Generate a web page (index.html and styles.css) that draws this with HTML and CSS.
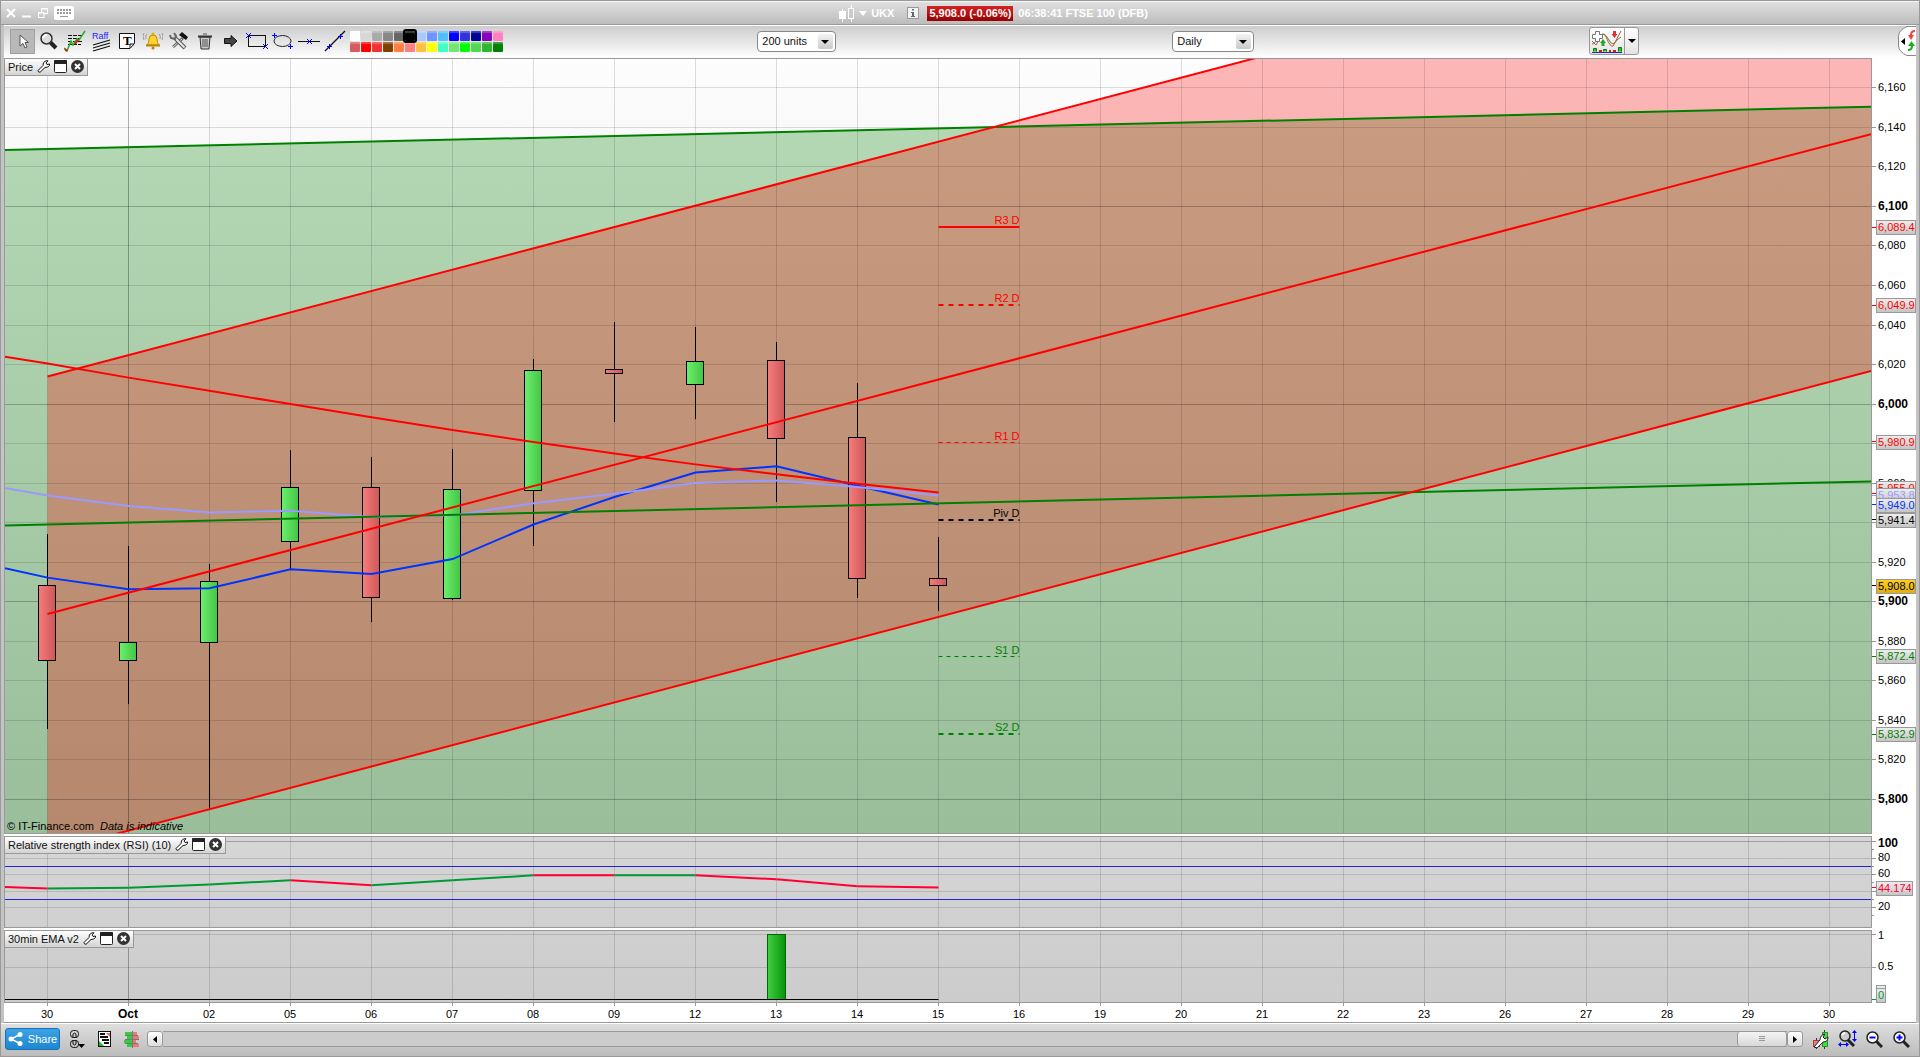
FILE: index.html
```
<!DOCTYPE html>
<html lang="en">

<head>
  <meta charset="UTF-8" />
  <title>UKX FTSE 100 (DFB)</title>
  <link rel="stylesheet" href="styles.css">
</head>

<body>
  <!-- title bar -->
  <header class="titlebar">
    <div class="win-btns">
      <button type="button" aria-label="Close"><svg width="10" height="10"><path d="M1 1L9 9M9 1L1 9" stroke="#fff" stroke-width="2"/></svg></button>
      <button type="button" aria-label="Minimise"><svg width="10" height="10"><path d="M0 8.5H9" stroke="#fff" stroke-width="2"/></svg></button>
      <button type="button" aria-label="Restore"><svg width="10" height="10"><path d="M3.500 4V.5H9.500V5.500H6M3 1H10M.5 4.500H6V9.500H.5zM0 5H6" fill="none" stroke="#fff"/></svg></button>
      <button type="button" aria-label="Keyboard"><svg width="20" height="14"><rect width="20" height="14" rx="2" fill="#fff"/><path d="M3 4H17M3 7H17" stroke="#999" stroke-width="2" stroke-dasharray="2 1"/><path d="M6 10.500H14" stroke="#999"/></svg></button>
    </div>
    <div class="instrument">
      <svg width="16" height="17"><path d="M3.500 4V17M12.500 0V17" stroke="#fff"/><rect y="6" width="7" height="8" fill="#fff"/><rect x="9.500" y="3.500" width="5" height="10" fill="#ccc" stroke="#fff"/></svg>
      <svg class="drop" width="8" height="5"><path d="M0 0H8L4 5z" fill="#fff"/></svg>
      <b>UKX</b>
      <svg class="info" width="12" height="12"><rect x=".5" y=".5" width="11" height="11" fill="#f4f4f4" stroke="#999"/><path d="M5 2H7V3.500H5zM4 5H7V9H8V10H4V9H5V6H4z" fill="#666"/></svg>
      <b class="quote">5,908.0 (-0.06%)</b>
      <b>06:38:41 FTSE 100 (DFB)</b>
    </div>
  </header>

  <!-- drawing tools -->
  <div class="toolbar">
    <div class="tools">
      <button type="button" class="tool on" aria-label="Select"><svg width="24" height="24"><path d="M9 6V17L12 14.500L14 19L16 18L14 13.500H17.500z" fill="#fff" stroke="#555"/></svg></button>
      <button type="button" class="tool" aria-label="Zoom"><svg width="18" height="18"><path d="M10 10L16 16" stroke="#222" stroke-width="4"/><circle cx="6.500" cy="6.500" r="5.500" fill="#ddd" stroke="#333" stroke-width="1.500"/><path d="M3 6Q4 3 7 3" stroke="#fff" stroke-width="2" fill="none"/></svg></button>
      <button type="button" class="tool" aria-label="Automatic trend"><svg width="22" height="22"><path d="M4 5.500H18M4 8.500H16M4 11.500H18M4 14.500H17" stroke="#111" stroke-dasharray="4 1"/><path d="M0 18L3 21L7 11L9 15L13 9L15 10L21 1" fill="none" stroke="#1fae2b" stroke-width="1.500"/><path d="M1 19L3 21M11 14L14 10" stroke="#e11" stroke-width="2"/></svg></button>
      <button type="button" class="tool" aria-label="Raff channel"><svg width="19" height="21"><text class="raff" x="0" y="8">Raff</text><path d="M1 14L18 9M1 17L18 12M1 20L18 15" stroke="#111" stroke-width="1.200"/></svg></button>
      <button type="button" class="tool" aria-label="Text"><svg width="16" height="16"><path d="M.5.5H15.500V10.500L11 15.500H.5z" fill="#fff" stroke="#111"/><path d="M11 15V11H15" fill="none" stroke="#111"/><text class="serif" x="4" y="12">T</text></svg></button>
      <button type="button" class="tool" aria-label="Alert"><svg width="20" height="18"><path d="M4 13Q6 11 6 7Q6 3 10 3Q14 3 14 7Q14 11 16 13z" fill="#ffd22e" stroke="#c08a00"/><path d="M3 13.500H17" stroke="#b98500" stroke-width="2"/><circle cx="10" cy="2" r="1.500" fill="#e0a800"/><circle cx="10" cy="16" r="1.500" fill="#b98500"/><path d="M4 2Q2 4 3 7M1 1Q-1 4 1 8M16 2Q18 4 17 7M19 1Q21 4 19 8" fill="none" stroke="#999"/></svg></button>
      <button type="button" class="tool" aria-label="Settings"><svg width="20" height="18"><path d="M4 15L14 6" stroke="#666" stroke-width="3"/><path d="M4 15L13 7" stroke="#ddd"/><path d="M5 5L16 16" stroke="#555" stroke-width="4"/><path d="M5 5L15.500 15.500" stroke="#e8e8e8" stroke-width="2"/><path d="M1 3L2 6L6 7L7 4L5 1" fill="none" stroke="#666" stroke-width="2"/><path d="M10 3L13 0L19 5L17 8z" fill="#111"/></svg></button>
      <button type="button" class="tool" aria-label="Delete"><svg width="14" height="17"><path d="M2 4H12L11 16H3z" fill="#ccc" stroke="#333"/><path d="M0 3.500H14" stroke="#333" stroke-width="2"/><path d="M5 1H9M5 6V14M7 6V14M9 6V14" stroke="#555"/></svg></button>
      <button type="button" class="tool" aria-label="Arrow"><svg width="14" height="12"><path d="M.5 3.500H7V.5L13 6L7 11.500V8.500H.5z" fill="#444" stroke="#111"/></svg></button>
      <button type="button" class="tool" aria-label="Rectangle"><svg width="22" height="16"><rect x="2.500" y="2.500" width="17" height="11" fill="none" stroke="#111"/><path d="M0 0L5 5M5 0L0 5M17 11L22 16M22 11L17 16" stroke="#00f"/></svg></button>
      <button type="button" class="tool" aria-label="Ellipse"><svg width="22" height="16"><ellipse cx="10.500" cy="8" rx="8.500" ry="5.500" fill="none" stroke="#222"/><path d="M0 2.500H5M2.500 0V5M16 13.500H21M18.500 11V16" stroke="#00f"/></svg></button>
      <button type="button" class="tool" aria-label="Horizontal line"><svg width="22" height="8"><path d="M0 4.500H22" stroke="#111"/><path d="M9 2L14 7M14 2L9 7" stroke="#00f"/></svg></button>
      <button type="button" class="tool" aria-label="Line"><svg width="22" height="22"><path d="M1 21L21 1" stroke="#111" stroke-width="1.200"/><path d="M3 16.500H8M5.500 14V19M14 6.500H19M16.500 4V9" stroke="#00f"/></svg></button>
      <div class="palette" id="palette"></div>
    </div>
    <div><label class="combo"><select aria-label="Units"><option>200 units</option></select></label></div>
    <div><label class="combo daily"><select aria-label="Timeframe"><option>Daily</option></select></label></div>
    <div class="end">
      <div class="indicator">
        <button type="button" aria-label="Add indicator"><svg width="32" height="24"><path d="M8 8Q12 2 16 8L20 16Q22 20 26 11L22 17Q19 18 16 8Q13 3 11 6z" fill="#cde8cd"/><path d="M1 15Q4 15 8 8Q12 2 16 8L20 14Q23 16 26 11L30 8" fill="none" stroke="#2aa52a"/><path d="M1 12L5 16L11 6Q13 3 16 10Q19 18 22 17L30 2" fill="none" stroke="#d44"/><path d="M4.500 2.500H8.500V5.500H11.500V9.500H8.500V12.500H4.500V9.500H1.500V5.500H4.500z" fill="#fff" stroke="#777"/><path d="M23.500 2V6" stroke="#d33" stroke-width="3"/><path d="M12 17V13" stroke="#2a2" stroke-width="3"/><path d="M20.500 5H26.500L23.500 9z" fill="#d33"/><path d="M9 14H15L12 10z" fill="#2a2"/><path d="M2.500 22.500V19.500H5.500V22.500M12.500 22.500V20.500H15.500V22.500M27.500 22.500V18.500H30.500V22.500" fill="#2c2" stroke="#171"/><path d="M8 22H11M18 22H20M22 22H25" stroke="#c22" stroke-width="2"/><path d="M1 23.500H31" stroke="#22c"/></svg></button>
        <button type="button" class="arrow" aria-label="More indicators"><svg width="8" height="4"><path d="M0 0H8L4 4z"/></svg></button>
      </div>
      <button type="button" class="side-tab" aria-label="Orders"><svg width="18" height="30"><path d="M18 .5H9Q1 4 .5 10V20Q1 26 9 29.500H18" fill="#fff" stroke="#888"/><path d="M3 15.500L7 12V19z"/><path d="M17 5Q13 5 13 9" fill="none" stroke="#e44" stroke-width="2"/><path d="M10 9H16L13 14z" fill="#e44"/><path d="M10 24Q14 24 14 20" fill="none" stroke="#2a2" stroke-width="2"/><path d="M10 20H17L13.500 15z" fill="#2a2"/></svg></button>
    </div>
  </div>

  <!-- charts -->
  <main class="charts">
    <section class="panel price">
      <div class="plot" id="pricePlot">
        <h2 class="caption">Price
          <button type="button" aria-label="Settings"><svg width="13" height="13"><use href="#wrench"/></svg></button>
          <button type="button" aria-label="Maximise"><svg width="13" height="13"><use href="#window"/></svg></button>
          <button type="button" aria-label="Close"><svg width="13" height="13"><use href="#close"/></svg></button>
        </h2>
      </div>
      <div class="axis" id="priceAxis"></div>
    </section>
    <section class="panel rsi">
      <div class="plot" id="rsiPlot">
        <h2 class="caption">Relative strength index (RSI) (10)
          <button type="button" aria-label="Settings"><svg width="13" height="13"><use href="#wrench"/></svg></button>
          <button type="button" aria-label="Maximise"><svg width="13" height="13"><use href="#window"/></svg></button>
          <button type="button" aria-label="Close"><svg width="13" height="13"><use href="#close"/></svg></button>
        </h2>
      </div>
      <div class="axis" id="rsiAxis"></div>
    </section>
    <section class="panel ema">
      <div class="plot" id="emaPlot">
        <h2 class="caption">30min EMA v2
          <button type="button" aria-label="Settings"><svg width="13" height="13"><use href="#wrench"/></svg></button>
          <button type="button" aria-label="Maximise"><svg width="13" height="13"><use href="#window"/></svg></button>
          <button type="button" aria-label="Close"><svg width="13" height="13"><use href="#close"/></svg></button>
        </h2>
      </div>
      <div class="axis" id="emaAxis"></div>
    </section>
    <div class="dates" id="dates"></div>
  </main>

  <!-- bottom bar -->
  <footer class="footer">
    <button type="button" class="share"><svg width="15" height="14"><path d="M13 2L3 7L13 12" fill="none" stroke="#fff" stroke-width="1.500"/><circle cx="12" cy="2.500" r="2.500" fill="#fff"/><circle cx="3" cy="7" r="2.500" fill="#fff"/><circle cx="12" cy="11.500" r="2.500" fill="#fff"/></svg>Share</button>
    <button type="button" class="foot-btn" aria-label="Link charts"><svg width="15" height="19"><g fill="none" stroke="#111"><rect x=".5" y=".5" width="8" height="7" rx="3"/><path d="M3 8V4Q4.500 2 6 4V8M3 10V14Q4.500 16 6 14V10"/><rect x=".5" y="10.500" width="8" height="7" rx="3"/></g><path d="M8 14H15L11.500 18z"/></svg></button>
    <button type="button" class="foot-btn" aria-label="News"><svg width="13" height="16"><rect x=".5" y=".5" width="12" height="15" fill="#fff" stroke="#111"/><path d="M2 3H7M2 6H10M4 9H11M6 12H11" stroke="#111" stroke-width="2"/><path d="M8 2H12V6z" fill="#e66"/><path d="M1 10L6 15H1z" fill="#2b2"/></svg></button>
    <button type="button" class="foot-btn" aria-label="Order book"><svg width="16" height="17"><path d="M1 2.500H8M3 6.500H8M0 10.500H8M3 14.500H8" stroke="#3c4" stroke-width="3"/><path d="M9 2.500H13M9 6.500H15M9 10.500H12M9 14.500H15" stroke="#e77" stroke-width="3"/><path d="M8.500 0V17M1 4.500H14M1 8.500H15M1 12.500H14" stroke="#777"/></svg></button>
    <div class="scroll">
      <button type="button" aria-label="Scroll left"><svg width="4" height="7"><path d="M4 0V7L0 3.500z"/></svg></button>
      <div class="track"><div class="thumb"></div></div>
      <button type="button" aria-label="Scroll right"><svg width="4" height="7"><path d="M0 0V7L4 3.500z"/></svg></button>
    </div>
    <button type="button" class="foot-btn" aria-label="Chart settings"><svg width="16" height="19"><path d="M3.500 8V19M11.500 0V19" stroke="#333"/><rect x=".5" y="10.500" width="6" height="6" fill="#e77" stroke="#944"/><rect x="9.500" y="2.500" width="5" height="14" fill="#4d4" stroke="#292"/><path d="M1 17L7 10Q7 5 12 4L10 7L12 9L15 7Q15 12 10 12L4 18z" fill="#fff" stroke="#222"/></svg></button>
    <button type="button" class="foot-btn" aria-label="Fit zoom"><svg width="19" height="18"><path d="M9 9L16 16" stroke="#222" stroke-width="3"/><circle cx="7" cy="6" r="5" fill="#ccc" stroke="#222" stroke-width="1.500"/><path d="M4 5Q5 3 7 3" stroke="#fff" fill="none" stroke-width="2"/><path d="M16.500 2V10M2 14.500H9" stroke="#00f"/><path d="M14 3L16.500 0L19 3zM14 9L16.500 12L19 9zM3 12L0 14.500L3 17zM8 12L11 14.500L8 17z" fill="#00f"/></svg></button>
    <button type="button" class="foot-btn" aria-label="Zoom out"><svg width="17" height="17"><path d="M10 10L16 16" stroke="#222" stroke-width="3"/><circle cx="6.500" cy="6.500" r="5.500" fill="#fff" stroke="#222" stroke-width="1.500"/><path d="M3.500 6.500H9.500" stroke="#00f" stroke-width="2"/></svg></button>
    <button type="button" class="foot-btn" aria-label="Zoom in"><svg width="17" height="17"><path d="M10 10L16 16" stroke="#222" stroke-width="3"/><circle cx="6.500" cy="6.500" r="5.500" fill="#fff" stroke="#222" stroke-width="1.500"/><path d="M3.500 6.500H9.500M6.500 3.500V9.500" stroke="#00f" stroke-width="2"/></svg></button>
  </footer>

  <!-- shared icons and fills -->
  <svg class="defs" width="0" height="0">
    <defs>
      <symbol id="wrench" viewBox="0 0 13 13"><path d="M1 10.500L6 5.500Q5.500 2 9 .8L11 .8L9 3L10 4.500L12.500 4V5.500Q11 7.500 8 7.500L3 12.300Q1 12.300 1 10.500z" fill="#fff" stroke="#111"/></symbol>
      <symbol id="window" viewBox="0 0 13 13"><rect x=".5" y=".5" width="12" height="12" rx="1" fill="#fff" stroke="#222"/><rect width="13" height="4" rx="1" fill="#222"/></symbol>
      <symbol id="close" viewBox="0 0 13 13"><circle cx="6.500" cy="6.500" r="6.500" fill="#333"/><path d="M4 4L9 9M9 4L4 9" stroke="#fff" stroke-width="2"/></symbol>
      <linearGradient id="up"><stop offset="0" stop-color="#6cf06c"/><stop offset="1" stop-color="#44c444"/></linearGradient>
      <linearGradient id="down"><stop offset="0" stop-color="#f87c7c"/><stop offset="1" stop-color="#cc5858"/></linearGradient>
      <linearGradient id="bar"><stop offset="0" stop-color="#3fd03f"/><stop offset="1" stop-color="#0a930a"/></linearGradient>
      <linearGradient id="tag" x2="0" y2="1"><stop offset="0" stop-color="#eee"/><stop offset="1" stop-color="#c4c4c4"/></linearGradient>
      <linearGradient id="last" x2="0" y2="1"><stop offset="0" stop-color="#ffd21c"/><stop offset="1" stop-color="#e0ac14"/></linearGradient>
    </defs>
  </svg>
  <script src="chart.js"></script>
</body>

</html>
```
FILE: styles.css
```
/* reset */
* {
  box-sizing: border-box;
}

body,
h2 {
  margin: 0;
  padding: 0;
}

body {
  display: flex;
  flex-direction: column;
  height: 100vh;
  min-height: 500px;
  border: 1px solid #999;
  background-color: #c4c4c4;
  font-family: "Liberation Sans", Arial, sans-serif;
  font-size: 11px;
  color: #111;
}

button {
  display: flex;
  align-items: center;
  justify-content: center;
  flex: none;
  margin: 0;
  padding: 0;
  border: 0;
  background: none;
  font: inherit;
}

svg {
  display: block;
  flex: none;
}

svg text {
  font-size: 11px;
}

svg .bold {
  font-size: 12px;
  font-weight: bold;
}

svg .italic {
  font-style: italic;
}

svg .raff {
  font-size: 9px;
  fill: #22f;
}

svg .serif {
  font-family: "Liberation Serif", serif;
  font-size: 13px;
  font-weight: bold;
}

.defs {
  position: absolute;
}

/* title bar */
.titlebar {
  display: grid;
  grid-template-columns: 43.7% 1fr;
  align-items: center;
  flex: none;
  height: 24px;
  border-top: 1px solid #f4f4f4;
  border-bottom: 1px solid #999;
  background: linear-gradient(#e0e0e0, #bcbcbc);
}

.win-btns {
  display: flex;
  gap: 6px;
  padding-left: 5px;
}

.instrument {
  display: flex;
  align-items: center;
  color: #fff;
  line-height: 15px;
  white-space: nowrap;
}

.drop {
  margin: 0 4px;
}

.info {
  margin: 0 8px 0 13px;
}

.quote {
  margin-right: 5px;
  padding: 0 2px;
  background: linear-gradient(#d42222, #980000);
}

/* toolbar */
.toolbar {
  display: grid;
  grid-template-columns: 39.4% 21.7% 21.8% 1fr;
  align-items: center;
  flex: none;
  height: 33px;
  margin: 0 3px;
  padding-bottom: 2px;
  border-top: 1px solid #fff;
  background: linear-gradient(#cdcdcd, #fff);
}

.tools {
  display: flex;
  align-items: center;
  padding-left: 6px;
}

.tool {
  width: 26px;
}

.tool.on {
  width: 25px;
  height: 25px;
  margin-right: 1px;
  border: 1px solid #a0a0a0;
  background-color: #b8b8b8;
}

.palette {
  display: grid;
  grid-template-columns: repeat(14, 10px);
  gap: 1px;
  margin-left: 2px;
}

.swatch {
  width: 10px;
  height: 10px;
  border-radius: 1px;
  box-shadow: inset 0 2px 1px rgba(255, 255, 255, .25);
}

.swatch.on {
  outline: 2px solid #000;
  z-index: 1;
}

.combo {
  position: relative;
  display: block;
  width: 79px;
}

.combo select {
  display: block;
  appearance: none;
  width: 100%;
  height: 21px;
  padding: 0 4px;
  border: 1px solid #888;
  border-radius: 4px;
  background-color: #fff;
  font: inherit;
  color: #111;
}

.combo::before {
  content: '';
  position: absolute;
  top: 3px;
  right: 3px;
  width: 15px;
  height: 15px;
  border-radius: 2px;
  background: linear-gradient(#f4f4f4, #c8c8c8);
}

/* drop-down triangle */
.combo::after {
  content: '';
  position: absolute;
  top: 9px;
  right: 7px;
  border: 4px solid transparent;
  border-top-color: #000;
  border-bottom: 0;
}

.combo.daily {
  width: 82px;
}

.end {
  display: flex;
  justify-content: space-between;
  align-items: center;
}

.indicator {
  display: flex;
  height: 28px;
  border: 1px solid #999;
  border-radius: 3px;
  background: linear-gradient(#fff, #e4e4e4);
}

.indicator button {
  width: 34px;
}

.indicator .arrow {
  width: 14px;
  border-left: 1px solid #999;
}

/* charts */
.charts {
  display: grid;
  grid-template-rows: minmax(0, 1fr) 92px 75px 19px;
  flex: 1;
  min-height: 0;
  margin: 0 3px;
  border-bottom: 1px solid #999;
  background-color: #fff;
}

.panel {
  display: grid;
  grid-template-columns: minmax(0, 1fr) 44px;
  min-height: 0;
}

.price {
  margin-bottom: 2px;
}

.ema {
  margin-top: 2px;
}

.plot {
  position: relative;
  overflow: hidden;
  border: 1px solid #999;
}

.price .plot {
  background: linear-gradient(#fdfdfd, #d6d6d6);
}

.rsi .plot {
  background: linear-gradient(#d6d6d6, #d0d0d0);
}

.ema .plot {
  background: linear-gradient(#d0d0d0, #cccccc);
}

.axis {
  overflow: hidden;
}

/* caption lies over the plot */
.caption {
  position: absolute;
  top: 0;
  left: 0;
  display: flex;
  align-items: center;
  gap: 4px;
  height: 17px;
  padding: 0 3px 1px;
  border-right: 1px solid #999;
  border-bottom: 1px solid #999;
  background: linear-gradient(#fff, #d4d4d4);
  font-size: 11px;
  font-weight: normal;
  white-space: nowrap;
}

.dates {
  overflow: hidden;
}

/* bottom bar */
.footer {
  display: flex;
  align-items: center;
  flex: none;
  height: 33px;
  padding: 0 4px 2px;
  border-top: 1px solid #fff;
  background: linear-gradient(#dedede, #bcbcbc);
}

.share {
  gap: 5px;
  width: 55px;
  height: 22px;
  margin-right: 4px;
  border: 1px solid #1673b8;
  border-radius: 3px;
  background: linear-gradient(#3da2e6, #1f86d0);
  color: #fff;
}

.foot-btn {
  width: 27px;
}

.scroll {
  display: flex;
  align-items: center;
  flex: 1;
  margin: 0 4px 0 2px;
}

.scroll button {
  width: 16px;
  height: 16px;
  border: 1px solid #999;
  border-radius: 3px;
  background: linear-gradient(#fff, #ddd);
}

.track {
  display: flex;
  justify-content: flex-end;
  flex: 1;
  height: 16px;
  border: solid #999;
  border-width: 1px 0;
  background-color: #ccc;
}

.thumb {
  width: 50px;
  border: solid #999;
  border-width: 0 1px;
  border-radius: 3px;
  background: linear-gradient(#999, #999) center 4px / 6px 1px no-repeat, linear-gradient(#999, #999) center 6px / 6px 1px no-repeat, linear-gradient(#999, #999) center 8px / 6px 1px no-repeat, linear-gradient(#f4f4f4, #d8d8d8);
}
```
FILE: chart.js
```
var NS = 'http://www.w3.org/2000/svg';

var days = ['30', 'Oct', '02', '05', '06', '07', '08', '09', '12', '13', '14', '15',
  '16', '19', '20', '21', '22', '23', '26', '27', '28', '29', '30'];

// open, high, low, close
var candles = [
  [5908.2, 5934.2, 5835.6, 5870.3],
  [5870.3, 5928.2, 5848.2, 5879.4],
  [5879.4, 5919.1, 5795.4, 5910.2],
  [5930.5, 5976.7, 5916.0, 5957.8],
  [5957.8, 5973.2, 5889.7, 5902.1],
  [5901.6, 5977.3, 5900.9, 5956.8],
  [5956.3, 6022.8, 5928.2, 6017.0],
  [6017.5, 6041.5, 5990.9, 6015.4],
  [6009.9, 6039.0, 5992.4, 6021.5],
  [6022.0, 6031.4, 5950.4, 5982.6],
  [5983.1, 6010.6, 5901.9, 5911.7],
  [5911.7, 5932.7, 5895.3, 5908.2]
];

// first value of each series sits on the left edge of the plot
var averages = [
  ['#03f', [5916.9, 5912.2, 5906.3, 5906.8, 5916.4, 5914.0, 5921.6, 5939.1, 5953.0, 5965.4, 5968.5, 5958.7, 5949.2]],
  ['#99f', [5957.5, 5953.8, 5948.4, 5945.2, 5946.0, 5942.9, 5943.7, 5949.8, 5954.6, 5960.1, 5961.4, 5958.0, 5953.8]],
  ['#f00', [6023.9, 6020.5, 6013.4, 6006.7, 6000.0, 5993.3, 5986.9, 5980.8, 5975.0, 5969.5, 5964.5, 5959.7, 5955.3]]
];
var rsi = [44.8, 43, 44, 48, 53, 46.9, 53, 59, 59, 59, 54.2, 45.7, 44.2];
var rsiColors = ['r', 'g', 'g', 'g', 'r', 'g', 'g', 'r', 'g', 'r', 'r', 'r'];

// label, price, colour, line width, dash
var pivots = [
  ['R3 D', 6089.4, '#f00', 2, ''],
  ['R2 D', 6049.9, '#f00', 2, '5 5'],
  ['R1 D', 5980.9, '#f00', 1, '4 4'],
  ['Piv D', 5941.4, '#000', 2, '5 5'],
  ['S1 D', 5872.4, 'green', 1, '4 4'],
  ['S2 D', 5832.9, 'green', 2, '5 5']
];

// text, price, colour, tag shift, fill
var tags = [
  ['6,089.4', 6089.4, '#f00'],
  ['6,049.9', 6049.9, '#f00'],
  ['5,980.9', 5980.9, '#f00'],
  ['5,955.0', 5955.0, '#f00', -5],
  ['5,953.8', 5953.8, '#99f'],
  ['5,949.0', 5949.0, '#03f'],
  ['5,941.4', 5941.4, '#000'],
  ['5,908.0', 5908.0, '#000', 0, 'url(#last)'],
  ['5,872.4', 5872.4, 'green'],
  ['5,832.9', 5832.9, 'green']
];

// axis labels that a tag would cover
var covered = [5980, 5940];

var swatches = ['#fff', '#d8d8d8', '#aaa', '#888', '#666', '#000', '#a8c8ff', '#6f93ff', '#4fbfff', '#00f', '#33d', '#009', '#80b', '#ff80c0',
  '#d55c5c', '#f00', '#e33', '#804000', '#ff8040', '#ff8080', '#ffc040', '#ff0', '#40ffc0', '#70e870', '#0f0', '#50d850', '#2db82d', '#008000'];

function add(parent, tag, attrs, text) {
  var el = document.createElementNS(NS, tag);
  for (var k in attrs) el.setAttribute(k, attrs[k]);
  if (text) el.textContent = text;
  parent.appendChild(el);
  return el;
}

function line(svg, x1, y1, x2, y2, color, width, dash) {
  return add(svg, 'line', { x1: x1, y1: y1, x2: x2, y2: y2, stroke: color, 'stroke-width': width || 1, 'stroke-dasharray': dash || 'none' });
}

// new svg that fills the box
function canvas(id) {
  var box = document.getElementById(id);
  var old = box.querySelector('.canvas');
  if (old) old.remove();
  var w = box.clientWidth, h = box.clientHeight;
  var svg = document.createElementNS(NS, 'svg');
  svg.setAttribute('class', 'canvas');
  svg.setAttribute('width', w);
  svg.setAttribute('height', h);
  box.insertBefore(svg, box.firstChild);
  return { svg: svg, w: w, h: h };
}

// value -> y
function scale(top, bottom, h) {
  return function (v) { return (top - v) / (top - bottom) * h; };
}

function half(v) { return Math.floor(v) + .5; }

function dayX(w) {
  return function (i) { return (42.5 + 81 * i) * w / 1866; };
}

function gridX(c) {
  var x = dayX(c.w);
  days.forEach(function (d, i) {
    line(c.svg, half(x(i)), 0, half(x(i)), c.h, d == 'Oct' ? 'rgba(0,0,0,.3)' : 'rgba(0,0,0,.13)');
  });
}

function drawTag(svg, text, y, color, shift, fill, w) {
  line(svg, 0, half(y + 1), 4, half(y + 1), color);
  var top = Math.round(y + 1 - 7 + (shift || 0)) + .5;
  add(svg, 'rect', { x: 4.5, y: top, width: w || 39, height: 14, fill: fill || 'url(#tag)', stroke: '#999' });
  add(svg, 'text', { x: 6, y: top + 10.5, fill: color }, text);
}

function drawPrice() {
  var c = canvas('pricePlot'), svg = c.svg, x = dayX(c.w), y = scale(6174.6, 5783, c.h), w = c.w, p;
  var right = (w - x(0)) / (x(1) - x(0));

  // channel fills
  add(svg, 'polygon', { points: [0, y(6128.5), w, y(6150.5), w, c.h, 0, c.h], fill: 'green', 'fill-opacity': .28 });
  add(svg, 'polygon', { points: [x(0), y(6014), w, y(6014 + 10.8 * right), w, y(6016.8), x(0), y(5773.4)], fill: 'red', 'fill-opacity': .28 });

  gridX(c);
  for (p = 5800; p <= 6160; p += 20) {
    line(svg, 0, half(y(p)), w, half(y(p)), p % 100 ? 'rgba(0,0,0,.13)' : 'rgba(0,0,0,.25)');
  }

  candles.forEach(function (k, i) {
    var cx = half(x(i)), top = Math.max(k[0], k[3]), bot = Math.min(k[0], k[3]);
    line(svg, cx, y(k[1]), cx, y(k[2]), '#000');
    add(svg, 'rect', {
      x: cx - 9, y: half(y(top)), width: 17, height: Math.round(y(bot) - y(top)),
      fill: k[3] > k[0] ? 'url(#up)' : 'url(#down)', stroke: '#000'
    });
  });

  averages.forEach(function (a) {
    var pts = a[1].map(function (v, i) { return (i ? x(i - 1) : 0) + ',' + y(v); });
    add(svg, 'polyline', { points: pts.join(' '), fill: 'none', stroke: a[0], 'stroke-width': 2 });
  });

  // channel lines
  line(svg, 0, y(6128.5), w, y(6150.5), 'green', 2);
  line(svg, 0, y(5938.6), w, y(5960.9), 'green', 2);
  line(svg, x(0), y(6014), w, y(6014 + 10.8 * right), 'red', 2);
  line(svg, x(0), y(5893.8), w, y(6136.6), 'red', 2);
  line(svg, x(0), y(5773.4), w, y(6016.8), 'red', 2);

  pivots.forEach(function (v) {
    var py = Math.round(y(v[1])) + (v[3] == 1 ? .5 : 0);
    line(svg, x(11), py, x(12), py, v[2], v[3], v[4]);
    add(svg, 'text', { x: x(12), y: py - 3, fill: v[2], 'text-anchor': 'end' }, v[0]);
  });

  add(svg, 'text', { x: 2, y: c.h - 3 }, '© IT-Finance.com');
  add(svg, 'text', { x: 95, y: c.h - 3, 'class': 'italic' }, 'Data is indicative');

  var a = canvas('priceAxis').svg;
  for (p = 6160; p >= 5800; p -= 20) {
    var ty = half(y(p) + 1);
    line(a, 0, ty, 4, ty, '#999');
    if (covered.indexOf(p) < 0) {
      add(a, 'text', { x: 6, y: ty + 3.5, 'class': p % 100 ? '' : 'bold' }, p.toLocaleString('en-US'));
    }
  }
  tags.forEach(function (t) { drawTag(a, t[0], y(t[1]), t[2], t[3], t[4]); });
}

function drawRsi() {
  var c = canvas('rsiPlot'), x = dayX(c.w), y = scale(105.45, -3.6, c.h), v, i;
  gridX(c);
  for (v = 20; v <= 100; v += 20) {
    line(c.svg, 0, half(y(v)), c.w, half(y(v)), v == 100 ? 'rgba(0,0,0,.25)' : 'rgba(0,0,0,.13)');
  }
  line(c.svg, 0, half(y(70)), c.w, half(y(70)), '#22d');
  line(c.svg, 0, half(y(30)), c.w, half(y(30)), '#22d');
  for (i = 1; i < rsi.length; i++) {
    line(c.svg, i > 1 ? x(i - 2) : 0, y(rsi[i - 1]), x(i - 1), y(rsi[i]), rsiColors[i - 1] == 'r' ? '#f03' : '#093', 2);
  }

  var a = canvas('rsiAxis').svg;
  for (v = 10; v <= 100; v += 10) {
    line(a, 0, half(y(v) + 1), v % 20 ? 2 : 4, half(y(v) + 1), '#999');
  }
  add(a, 'text', { x: 6, y: y(100) + 6, 'class': 'bold' }, '100');
  [80, 60, 20].forEach(function (v) {
    add(a, 'text', { x: 6, y: half(y(v)) + 3.5 }, String(v));
  });
  drawTag(a, '44.174', y(44.174), '#f03', 0, null, 36);
}

function drawEma() {
  var c = canvas('emaPlot'), x = dayX(c.w), y = scale(1.054, -.038, c.h);
  gridX(c);
  line(c.svg, 0, half(y(1)), c.w, half(y(1)), 'rgba(0,0,0,.13)');
  line(c.svg, 0, half(y(.5)), c.w, half(y(.5)), 'rgba(0,0,0,.13)');
  add(c.svg, 'rect', { x: half(x(9)) - 9, y: half(y(1)), width: 18, height: Math.round(y(0) - y(1)), fill: 'url(#bar)', stroke: '#060' });
  line(c.svg, 0, half(y(0)), x(11), half(y(0)), '#000');

  var a = canvas('emaAxis').svg;
  line(a, 0, half(y(1) + 1), 4, half(y(1) + 1), '#999');
  line(a, 0, half(y(.5) + 1), 4, half(y(.5) + 1), '#999');
  add(a, 'text', { x: 6, y: half(y(1)) + 5.5 }, '1');
  add(a, 'text', { x: 6, y: half(y(.5)) + 3.5 }, '0.5');
  add(a, 'rect', { x: 4.5, y: half(y(0)) - 13, width: 9, height: 14, fill: 'url(#tag)', stroke: '#999' });
  drawTag(a, '0', y(0), '#093', -5, null, 9);
}

function drawDates() {
  var c = canvas('dates'), x = dayX(c.w - 46);
  days.forEach(function (d, i) {
    var cx = half(x(i) + 1);
    line(c.svg, cx, 0, cx, 3, '#999');
    add(c.svg, 'text', { x: cx - .5, y: 15, 'text-anchor': 'middle', 'class': d == 'Oct' ? 'bold' : '' }, d);
  });
}

function draw() {
  drawPrice();
  drawRsi();
  drawEma();
  drawDates();
}

swatches.forEach(function (color, i) {
  var b = document.createElement('button');
  b.type = 'button';
  b.className = i == 5 ? 'swatch on' : 'swatch';
  b.style.backgroundColor = color;
  b.setAttribute('aria-label', 'Colour ' + color);
  document.getElementById('palette').appendChild(b);
});

draw();
window.addEventListener('resize', draw);
```
